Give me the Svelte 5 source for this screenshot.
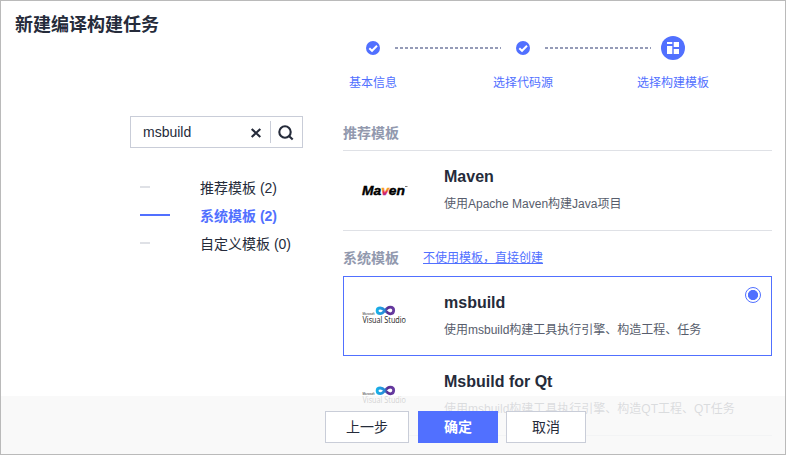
<script>
  const steps = ['基本信息', '选择代码源', '选择构建模板'];
  const categories = [
    { name: '推荐模板', count: 2 },
    { name: '系统模板', count: 2, active: true },
    { name: '自定义模板', count: 0 }
  ];
</script>

{#snippet visualStudio()}
  <svg class="logo" width="46" height="22" viewBox="0 0 46 22">
    <defs>
      <linearGradient id="loop" x1="14" x2="33" y1="0" y2="0" gradientUnits="userSpaceOnUse">
        <stop offset="0" stop-color="#16b5ea" />
        <stop offset=".45" stop-color="#2a86d4" />
        <stop offset=".6" stop-color="#5b2d91" />
        <stop offset="1" stop-color="#6a3fa5" />
      </linearGradient>
    </defs>
    <path d="M23.3 5.8C21.3 3.9 20 3 18.3 3C16.3 3 15.1 4.2 15.1 5.8S16.3 8.6 18.3 8.6C22.3 8.6 23.5 2.1 28.2 2.1C30.7 2.1 31.7 3.6 31.7 5.3S30.7 8.8 28.4 8.8C26.4 8.8 25 7.5 23.3 5.8Z" fill="none" stroke="url(#loop)" stroke-width="2.8" />
    <text x="0.5" y="9.6" font-size="3.2" textLength="12" lengthAdjust="spacingAndGlyphs">Microsoft</text>
    <text class="vs-name" x="0.5" y="17.8" font-size="9.4" textLength="43.5" lengthAdjust="spacingAndGlyphs">Visual Studio</text>
  </svg>
{/snippet}

<div class="window">
  <aside>
    <h1>新建编译构建任务</h1>
    <div class="search">
      <span class="query">msbuild</span>
      <svg class="clear" width="12" height="12" viewBox="0 0 12 12"><path d="M1.7 1.9l8.6 8.2M10.3 1.9l-8.6 8.2" /></svg>
      <span class="divider"></span>
      <svg class="find" width="16" height="16" viewBox="0 0 16 16"><circle cx="7" cy="7" r="5.7" /><path d="M10.7 10.7l4 3.9" /></svg>
    </div>
    <ul>
      {#each categories as c}
        <li class:active={c.active}><i></i><span>{c.name} ({c.count})</span></li>
      {/each}
    </ul>
  </aside>

  <main>
    <div class="steps">
      {#each steps as label, i}
        <div class="step">
          <div class="badge">
            {#if i < 2}
              <svg width="14" height="14" viewBox="0 0 14 14"><circle cx="7" cy="7" r="7" fill="#5170ff" /><path d="M3.3 7.3l2.7 2.5 5-5" fill="none" stroke="#fff" stroke-width="2" /></svg>
            {:else}
              <svg width="24" height="24" viewBox="0 0 24 24"><circle cx="12" cy="12" r="12" fill="#5170ff" /><path d="M6 6h5.3v2H6zM6 10h5.3v8H6zM12.7 6H18v5h-5.3zM12.7 13H18v5h-5.3z" fill="#fff" /></svg>
            {/if}
          </div>
          <span>{label}</span>
        </div>
        {#if i < 2}
          <svg class="dots" width="106" height="2"><path d="M0 1h106" /></svg>
        {/if}
      {/each}
    </div>

    <header class="first"><h2>推荐模板</h2></header>
    <section>
      <svg class="logo" width="46" height="20" viewBox="0 0 46 20">
        <defs>
          <linearGradient id="flame" x1="0" x2="0" y1="0" y2="1">
            <stop offset=".4" stop-color="#f69923" />
            <stop offset=".6" stop-color="#e3204f" />
            <stop offset=".8" stop-color="#b0278b" />
          </linearGradient>
        </defs>
        <text class="maven" x="0" y="14.8" font-size="12.6" textLength="43" lengthAdjust="spacingAndGlyphs">Ma<tspan fill="url(#flame)" stroke="url(#flame)">v</tspan>en</text>
        <path d="M43 6.5h2.5" stroke="#555" stroke-width=".8" />
      </svg>
      <div class="info"><h3>Maven</h3><p>使用Apache Maven构建Java项目</p></div>
    </section>

    <header><h2>系统模板</h2><a href="#create">不使用模板，直接创建</a></header>
    <section class="selected">
      {@render visualStudio()}
      <div class="info"><h3>msbuild</h3><p>使用msbuild构建工具执行引擎、构造工程、任务</p></div>
      <span class="radio"></span>
    </section>
    <section>
      {@render visualStudio()}
      <div class="info"><h3>Msbuild for Qt</h3><p>使用msbuild构建工具执行引擎、构造QT工程、QT任务</p></div>
    </section>
  </main>

  <footer>
    <button class="wide">上一步</button>
    <button class="primary">确定</button>
    <button>取消</button>
  </footer>
</div>

<style>
  :global(body) { margin: 0; background: #fff; }
  .window, .window * { box-sizing: border-box; }
  .window {
    position: relative;
    display: flex;
    width: 786px;
    height: 455px;
    overflow: hidden;
    border: 1px solid #bababa;
    background: #fff;
    color: #252b3a;
    font-family: "Liberation Sans", "Noto Sans CJK SC", sans-serif;
  }
  h1, h2, h3, p, ul { margin: 0; padding: 0; }
  aside { width: 342px; flex: none; }
  h1 { height: 48px; padding-left: 14px; font-size: 18px; line-height: 48px; }
  .search {
    display: flex;
    align-items: center;
    width: 173px;
    height: 32px;
    margin: 67px 0 0 129px;
    padding-left: 12px;
    border: 1px solid #c9cdd8;
  }
  .query { width: 107px; font-size: 14px; line-height: 20px; }
  .clear, .find { fill: none; stroke: #252b3a; stroke-width: 2.1; }
  .clear { margin-top: 2px; }
  .divider { width: 1px; height: 22px; margin: 0 7px 0 8px; background: #c9cdd8; }
  .find { margin-top: 2px; }
  ul { margin: 26px 0 0 139px; list-style: none; }
  li { display: flex; align-items: center; height: 28px; font-size: 14px; line-height: 28px; }
  li i { width: 10px; height: 2px; margin: 0 50px 2px 0; background: #dfe1e6; }
  li.active { color: #5170ff; font-weight: 700; }
  li.active i { width: 30px; margin-right: 30px; background: #5170ff; }
  main { width: 429px; flex: none; }
  .steps { display: flex; height: 110px; padding-top: 35px; }
  .step {
    display: flex;
    flex-direction: column;
    align-items: center;
    width: 80px;
    margin: 0 -18px 0 -10px;
    flex: none;
    color: #5170ff;
    font-size: 12px;
    line-height: 20px;
    white-space: nowrap;
  }
  .badge { display: flex; align-items: center; height: 24px; margin-bottom: 13px; }
  .dots { flex: none; margin: 11px -8px 0 0; fill: none; stroke: #959bb7; stroke-width: 2; stroke-dasharray: 3 2; }
  header { display: flex; align-items: center; height: 46px; padding-top: 9px; border-bottom: 1px solid #dfe1e6; }
  header.first { height: 40px; padding: 5px 0 0; }
  h2 { width: 80px; color: #9299ae; font-size: 14px; line-height: 20px; }
  a { color: #5170ff; font-size: 12px; line-height: 20px; }
  section { display: flex; position: relative; height: 80px; border-bottom: 1px solid #dfe1e6; }
  section.selected { height: 80px; border: 1px solid #5170ff; }
  .logo { flex: none; margin: 29px 0 0 19px; overflow: visible; fill: #222; }
  .info { margin-left: 36px; padding-top: 14px; }
  h3 { font-size: 16px; line-height: 24px; }
  p { margin-top: 5px; color: #575d6c; font-size: 12px; line-height: 20px; white-space: nowrap; }
  .selected .logo { margin: 28px 0 0 18px; }
  .selected .info { padding-top: 14px; }
  .maven { fill: #000; stroke: #000; stroke-width: .4; font-weight: 700; font-style: italic; }
  .vs-name { font-family: "Open Sans", sans-serif; }
  .radio {
    position: absolute;
    top: 10px;
    right: 10px;
    width: 16px;
    height: 16px;
    border: 1px solid #5170ff;
    border-radius: 50%;
    background: radial-gradient(circle, #5170ff 4.7px, #fff 5.4px);
  }
  header + .selected { margin-top: -1px; }
  footer {
    position: absolute;
    right: 0;
    bottom: 0;
    left: 0;
    display: flex;
    align-items: flex-start;
    gap: 8px;
    height: 58px;
    padding: 15px 0 0 324px;
    background: rgba(248, 248, 248, .82);
  }
  button {
    width: 80px;
    height: 32px;
    padding: 0;
    border: 1px solid #c9cdd8;
    background: #fff;
    color: #252b3a;
    font: 14px/28px "Liberation Sans", "Noto Sans CJK SC", sans-serif;
  }
  .wide { width: 84px; margin-right: 1px; }
  .primary { border-color: #5170ff; background: #5170ff; color: #fff; font-weight: 700; }
</style>
